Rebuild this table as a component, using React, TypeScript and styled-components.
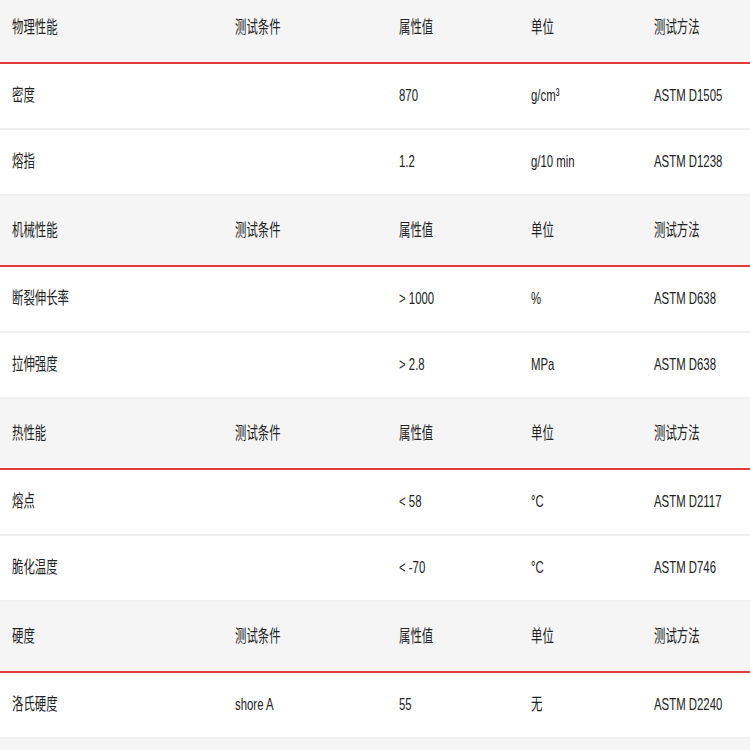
import React from "react"
import styled, { createGlobalStyle } from "styled-components"

const GlobalStyle = createGlobalStyle`
  html, body {
    margin: 0;
    padding: 0;
    background: #ffffff;
    overflow: hidden;
  }
  body {
    font-family: "Liberation Sans", "Noto Sans CJK SC", sans-serif;
    color: #333333;
  }
`

type Row = [string, string, string, string, string]

type Section = {
  title: string
  rows: Row[]
}

const sections: Section[] = [
  {
    title: "物理性能",
    rows: [
      ["密度", "", "870", "g/cm³", "ASTM D1505"],
      ["熔指", "", "1.2", "g/10 min", "ASTM D1238"],
    ],
  },
  {
    title: "机械性能",
    rows: [
      ["断裂伸长率", "", "> 1000", "%", "ASTM D638"],
      ["拉伸强度", "", "> 2.8", "MPa", "ASTM D638"],
    ],
  },
  {
    title: "热性能",
    rows: [
      ["熔点", "", "< 58", "°C", "ASTM D2117"],
      ["脆化温度", "", "< -70", "°C", "ASTM D746"],
    ],
  },
  {
    title: "硬度",
    rows: [["洛氏硬度", "shore A", "55", "无", "ASTM D2240"]],
  },
]

const App = () => {
  return (
    <>
      <GlobalStyle />
      <Table>
        {sections.map((s) => (
          <React.Fragment key={s.title}>
            <TableRow head>
              {[s.title, "测试条件", "属性值", "单位", "测试方法"].map((t, i) => (
                <Cell key={i}>
                  <Txt>{t}</Txt>
                </Cell>
              ))}
            </TableRow>
            {s.rows.map((r) => (
              <TableRow key={r[0]}>
                {r.map((t, i) => (
                  <Cell key={i}>
                    <Txt>{t}</Txt>
                  </Cell>
                ))}
              </TableRow>
            ))}
          </React.Fragment>
        ))}
        <TableRow head />
      </Table>
    </>
  )
}
export default App

const Table = styled.div`
  width: 750px;
  margin-top: -7px;
  display: flex;
  flex-direction: column;
`

const TableRow = styled.div<{ head?: boolean }>`
  display: grid;
  grid-template-columns: 223px 164px 132px 123px 1fr;
  height: ${(p) => (p.head ? "69px" : "64px")};
  background: ${(p) => (p.head ? "#f5f5f5" : "#ffffff")};
  border-bottom: 2px solid ${(p) => (p.head ? "#e4393c" : "#f0f0f0")};
`

const Cell = styled.div`
  display: flex;
  align-items: center;
  padding-left: 12px;
  overflow: visible;
  white-space: nowrap;
`

const Txt = styled.span`
  display: inline-block;
  font-size: 17px;
  line-height: 22px;
  color: #222222;
  transform: scaleX(0.67);
  transform-origin: left center;
`
